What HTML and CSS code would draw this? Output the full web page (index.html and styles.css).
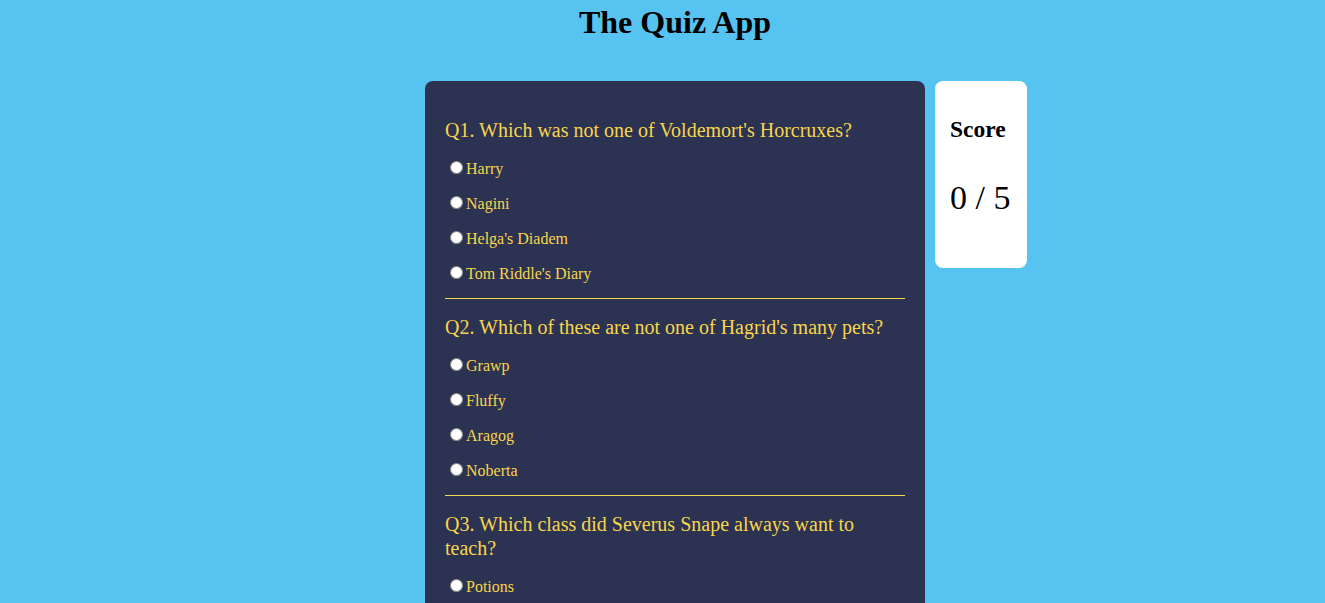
FILE: index.html
```html
<!DOCTYPE html>
<html lang="en">
<head>
<meta charset="utf-8">
<title>The Quiz App</title>
<link rel="stylesheet" href="styles.css">
</head>
<body>
<h1 class="title">The Quiz App</h1>
<div class="main">
  <div class="quiz">
    <div class="question">
      <p class="q-text">Q1. Which was not one of Voldemort's Horcruxes?</p>
      <div class="options">
        <label class="option"><input type="radio" name="q1"><span>Harry</span></label>
        <label class="option"><input type="radio" name="q1"><span>Nagini</span></label>
        <label class="option"><input type="radio" name="q1"><span>Helga's Diadem</span></label>
        <label class="option"><input type="radio" name="q1"><span>Tom Riddle's Diary</span></label>
      </div>
      <hr class="sep">
    </div>
    <div class="question">
      <p class="q-text">Q2. Which of these are not one of Hagrid's many pets?</p>
      <div class="options">
        <label class="option"><input type="radio" name="q2"><span>Grawp</span></label>
        <label class="option"><input type="radio" name="q2"><span>Fluffy</span></label>
        <label class="option"><input type="radio" name="q2"><span>Aragog</span></label>
        <label class="option"><input type="radio" name="q2"><span>Noberta</span></label>
      </div>
      <hr class="sep">
    </div>
    <div class="question">
      <p class="q-text">Q3. Which class did Severus Snape always want to teach?</p>
      <div class="options">
        <label class="option"><input type="radio" name="q3"><span>Potions</span></label>
        <label class="option"><input type="radio" name="q3"><span>Defence Against the Dark Arts</span></label>
        <label class="option"><input type="radio" name="q3"><span>Herbology</span></label>
        <label class="option"><input type="radio" name="q3"><span>Transfiguration</span></label>
      </div>
      <hr class="sep">
    </div>
  </div>
  <div class="score">
    <h2 class="score-title">Score</h2>
    <p class="score-value">0 / 5</p>
  </div>
</div>
</body>
</html>
```

FILE: styles.css
```css
html, body {
  margin: 0;
  padding: 0;
}
body {
  background: #56c3f1;
  font-family: "Liberation Serif", "Times New Roman", serif;
  color: #000;
}
.title {
  margin: 0;
  padding: 4px 0 0 25px;
  font-size: 32px;
  line-height: 37px;
  font-weight: bold;
  text-align: center;
}
.main {
  display: grid;
  grid-template-columns: 1fr 500px 1fr;
  column-gap: 10px;
  padding-left: 25px;
  margin-top: 40px;
  align-items: start;
}
.quiz {
  grid-column: 2;
  background: #2c3251;
  border-radius: 8px;
  padding: 37px 20px 20px;
  color: #f8d54c;
}
.q-text {
  margin: 0;
  font-size: 20px;
  line-height: 24px;
}
.options {
  margin-top: 9px;
  display: flex;
  flex-direction: column;
}
.option {
  height: 35px;
  display: flex;
  align-items: center;
  font-size: 16px;
}
.option input {
  margin: 0 3px 0 5px;
  width: 13px;
  height: 13px;
  position: relative;
  top: -1px;
}
.sep {
  margin: 7px 0 16px;
  border: 0;
  border-top: 1px solid #f8d54c;
  height: 0;
}
.score {
  grid-column: 3;
  justify-self: start;
  width: 92px;
  box-sizing: border-box;
  height: 187px;
  background: #fff;
  border-radius: 8px;
  padding: 34px 15px 0;
}
.score-title {
  margin: 0;
  font-size: 23.5px;
  line-height: 28px;
  font-weight: bold;
}
.score-value {
  margin: 35px 0 0;
  font-size: 34px;
  line-height: 40px;
  white-space: nowrap;
}
```
